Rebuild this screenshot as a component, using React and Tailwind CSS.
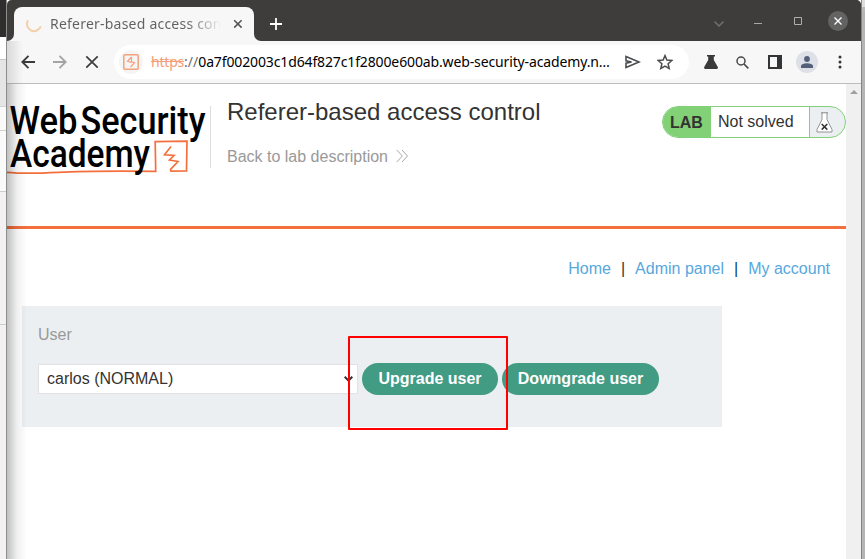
import React from "react";

function BackgroundLeft() {
  return (
    <div className="flex w-[6px] shrink-0 flex-col bg-[#f3f1f2]">
      <div className="h-[37px] bg-[#2f2d2d]" />
      <div className="h-[22px] bg-white" />
      <div className="h-[47px] border-t border-[#c8c8c8] bg-[#e5e5e5]" />
      <div className="h-[24px] border-t border-[#cfd4d4] bg-[#fafafa]" />
      <div className="h-[61px] border-t border-[#d0d0d0] bg-[#fafafa]" />
      <div className="h-[134px] border-y border-[#cccccc]" />
    </div>
  );
}

function TabBar() {
  return (
    <div className="flex h-[41px] shrink-0 bg-[#3f3d3b]">
      <div className="flex w-[7px] flex-col justify-end bg-[#f7f7f7]">
        <div className="h-full rounded-br-[7px] bg-[#3f3d3b]" />
      </div>
      <div className="flex w-[240px] bg-[#3f3d3b] pt-[7px]">
        <div className="flex w-full items-center rounded-t-[8px] bg-[#f7f7f7] pl-[11px]">
          <svg width="18" height="18" viewBox="0 0 18 18" fill="none" className="shrink-0">
            <path d="M3 5.3A7.1 7.1 0 1 0 15.8 11.2" stroke="#f3cfaa" strokeWidth="2" />
          </svg>
          <div className="ml-[7px] h-[20px] w-[171px] overflow-hidden whitespace-nowrap bg-gradient-to-r from-[#5f6061] from-80% to-[#f7f7f7] bg-clip-text font-['Noto_Sans',sans-serif] text-[14px] leading-[20px] tracking-[0.22px] text-transparent">
            Referer-based access con
          </div>
          <svg width="10" height="10" viewBox="0 0 10 10" className="ml-[12px] shrink-0">
            <path d="M1.2 1.2l7.4 7.4M8.6 1.2L1.2 8.6" stroke="#555" strokeWidth="1.6" />
          </svg>
        </div>
      </div>
      <div className="w-[8px] bg-[#f7f7f7]">
        <div className="h-full rounded-bl-[7px] bg-[#3f3d3b]" />
      </div>
      <div className="flex flex-1 items-start pl-[8px] pt-[18px]">
        <svg width="12" height="12" viewBox="0 0 12 12">
          <path d="M6 0v12M0 6h12" stroke="#fff" strokeWidth="1.8" />
        </svg>
      </div>
      <div className="flex h-[41px] items-start pt-[11px]">
        <svg width="10" height="20" viewBox="0 0 10 20" className="mr-[30px]">
          <path d="M.5 10.5L5 15l4.500-4.500" fill="none" stroke="#73706e" strokeWidth="1.5" />
        </svg>
        <svg width="8" height="20" viewBox="0 0 8 20" className="mr-[32px]">
          <path d="M0 12.500h8" stroke="#aaa8a5" />
        </svg>
        <svg width="8" height="20" viewBox="0 0 8 20" className="mr-[26px]">
          <path d="M.5 6.500h7v7h-7z" fill="none" stroke="#b0aeac" />
        </svg>
        <div className="mr-[13px] flex size-[20px] items-center justify-center rounded-full bg-[#636363]">
          <svg width="8" height="8" viewBox="0 0 8 8">
            <path d="M.5.5l7 7M7.500.5l-7 7" stroke="#fff" strokeWidth="1.4" />
          </svg>
        </div>
      </div>
    </div>
  );
}

function Toolbar() {
  return (
    <div className="flex h-[43px] shrink-0 items-center border-b border-[#bdbdbd] bg-[#f7f7f7] pl-[14px]">
      <svg width="14" height="14" viewBox="0 0 14 14" fill="none" stroke="#3a3b3d" strokeWidth="1.9">
        <path d="M14 7H1.500M7.500 .8L1.300 7l6.200 6.200" />
      </svg>
      <svg width="14" height="14" viewBox="0 0 14 14" fill="none" stroke="#a4a4a4" strokeWidth="1.9" className="ml-[18px]">
        <path d="M0 7h12.500M6.500 .8L12.700 7l-6.200 6.200" />
      </svg>
      <svg width="14" height="14" viewBox="0 0 14 14" fill="none" stroke="#3f4042" strokeWidth="1.8" className="ml-[18px]">
        <path d="M1.300 1.300l11.400 11.400M12.700 1.300L1.300 12.700" />
      </svg>
      <div className="ml-[15px] flex h-[34px] w-[575px] items-center rounded-full bg-white pl-[5px]">
        <div className="flex size-[24px] shrink-0 items-center justify-center rounded-full bg-[#f5f5f5]">
          <svg width="16" height="16" viewBox="0 0 16 16" fill="none" stroke="#f4a17d">
            <rect x=".8" y=".8" width="14.400" height="14.400" rx="1.200" strokeWidth="1.500" />
            <path d="M8.500 3L4.500 7.300l3 1V9M7.500 13l4-4.300-3-1V3" strokeWidth="1.200" />
          </svg>
        </div>
        <div className="ml-[8px] w-[474px] shrink-0 whitespace-nowrap font-['Noto_Sans',sans-serif] text-[14px] leading-[20px] text-black">
          <span className="tracking-[-0.2px] text-[#f49d76] line-through">https</span>
          <span className="text-[#6d6d6d]">://</span>
          <span className="tracking-[-0.13px]">0a7f002003c1d64f827c1f2800e600ab.web-security-academy.n…</span>
        </div>
        <svg width="16" height="14" viewBox="0 0 16 14" fill="none" stroke="#4c4d4f" strokeWidth="1.600" className="shrink-0">
          <path d="M1 1.500L14 7 1 12.500V8.200L6.500 7 1 5.800z" />
        </svg>
        <svg width="16" height="16" viewBox="0 0 16 16" fill="none" stroke="#4c4d4f" strokeWidth="1.500" className="ml-[16px] shrink-0">
          <path d="M8 1.600l1.900 4.500 4.900.4-3.700 3.200 1.100 4.800L8 12l-4.200 2.500 1.100-4.800L1.200 6.500l4.900-.4z" />
        </svg>
      </div>
      <svg width="14" height="14" viewBox="0 0 14 14" fill="#3a3a3a" className="ml-[15px]">
        <path d="M3 0h8v1.500H9.800V5l4 7q.5 2-1.300 2h-11Q-.3 14 .2 12l4-7V1.500H3z" />
      </svg>
      <svg width="13" height="13" viewBox="0 0 13 13" fill="none" stroke="#47484a" strokeWidth="1.500" className="ml-[18px]">
        <circle cx="5" cy="5" r="4" />
        <path d="M8 8l4.300 4.300" strokeWidth="1.700" />
      </svg>
      <svg width="14" height="14" viewBox="0 0 14 14" className="ml-[19px]">
        <path fill="#333435" fillRule="evenodd" d="M0 0h14v14H0zM2 2v10h7V2z" />
      </svg>
      <div className="ml-[14px] flex size-[22px] items-center justify-center rounded-full bg-[#dde1e7]">
        <svg width="12" height="12" viewBox="0 0 12 12" fill="#536078">
          <circle cx="6" cy="3" r="2.900" />
          <path d="M0 12V10C0 8 4 7.200 6 7.200S12 8 12 10v2z" />
        </svg>
      </div>
      <svg width="4" height="14" viewBox="0 0 4 14" fill="#333" className="ml-[20px]">
        <circle cx="2" cy="2" r="1.500" />
        <circle cx="2" cy="7" r="1.500" />
        <circle cx="2" cy="12" r="1.500" />
      </svg>
    </div>
  );
}

function AcademyLogo() {
  return (
    <svg width="200" height="82" viewBox="7 96 200 82" className="shrink-0 overflow-visible">
      <path d="M7 172.300Q25 174 58 172.300T155.700 171.300L155.200 141.600 187 141.100 186.500 170.800 171 171.200 170.500 169.500 178 161.500 169.500 160 174 155.500 164.500 154.800 171 146.500" fill="none" stroke="#f36f3d" strokeWidth="1.700" />
      <g fontFamily="Roboto, sans-serif" fontSize="38" fontWeight="500" fill="#000">
        <text x="9.500" y="134.300" textLength="68" lengthAdjust="spacingAndGlyphs">Web</text>
        <text x="80.500" y="134.300" textLength="125" lengthAdjust="spacingAndGlyphs">Security</text>
        <text x="10" y="167" textLength="140" lengthAdjust="spacingAndGlyphs">Academy</text>
      </g>
    </svg>
  );
}

function LabStatus() {
  return (
    <div className="mt-[22px] flex h-[32px] w-[184px] shrink-0 overflow-hidden rounded-full border border-[#82d17a] bg-[#ebeff2] text-[16px] leading-[30px] text-[#333332]">
      <div className="w-[48px] bg-[#82d177] pl-[7px] pt-px font-bold">LAB</div>
      <div className="w-[99px] border-r border-[#82d17a] bg-white pl-[7px]">Not solved</div>
      <svg width="17" height="21" viewBox="0 0 17 21" fill="none" className="ml-[6px] mt-[5px]">
        <path d="M6 1v6.500L1 17.500V20h15v-2.500L11 7.500V1" fill="#fff" stroke="#939393" />
        <path d="M5 .8h7" stroke="#888" />
        <path d="M5.700 12l5.600 5.600M11.300 12l-5.600 5.600" stroke="#333" strokeWidth="1.500" />
      </svg>
    </div>
  );
}

function PageHeader() {
  return (
    <header className="flex h-[145px] shrink-0 border-b-[3px] border-[#f36f3d]">
      <div className="pt-[12px]">
        <AcademyLogo />
      </div>
      <div className="ml-[3px] mt-[22px] h-[62px] w-px shrink-0 bg-[#dddddf]" />
      <div className="flex flex-1 flex-col pl-[16px] pt-[12px]">
        <h2 className="whitespace-nowrap text-[24px] leading-[32px] text-[#333332]">Referer-based access control</h2>
        <a className="mt-[19px] flex items-center text-[16px] leading-[20px] text-[#999]">
          Back to lab description
          <svg width="13" height="14" viewBox="0 0 13 14" fill="none" stroke="#aaa" className="mb-[2px] ml-[8px]">
            <path d="M.8 1l5.500 6-5.500 6M6 1l5.500 6L6 13" />
          </svg>
        </a>
      </div>
      <LabStatus />
    </header>
  );
}

function Page() {
  return (
    <div className="flex min-h-0 flex-1">
      <main className="flex w-[839px] flex-col bg-white text-[16px] text-[#333332]">
        <PageHeader />
        <nav className="mt-[30px] flex h-[20px] justify-end gap-[10px] pr-[16px] leading-[20px] text-[#56a8de]">
          <a>Home</a>
          <span className="text-[#333]">|</span>
          <a>Admin panel</a>
          <span className="text-[#0b3b66]">|</span>
          <a>My account</a>
        </nav>
        <form className="ml-[15px] mt-[27px] h-[121px] w-[700px] bg-[#ebeff2] px-[16px] pt-[19px]">
          <label className="block leading-[20px] text-[#999]">User</label>
          <div className="mt-[18px] flex items-center gap-[4px]">
            <div className="flex h-[30px] w-[320px] items-center justify-between border border-[#e2e2e4] bg-white pl-[8px] pr-[4px]">
              <span>carlos (NORMAL)</span>
              <svg width="9" height="6" viewBox="0 0 9 6" fill="none" stroke="#333" strokeWidth="2">
                <path d="M.7.8l3.800 3.800L8.300.8" />
              </svg>
            </div>
            <button type="button" className="h-[32px] w-[136px] rounded-full bg-[#429b83] font-bold text-white">
              Upgrade user
            </button>
            <button type="button" className="h-[32px] w-[157px] rounded-full bg-[#429b83] font-bold text-white">
              Downgrade user
            </button>
          </div>
        </form>
      </main>
      <div className="flex w-[15px] flex-col items-center bg-[#f0f0f0] pt-[6px]">
        <svg width="8" height="4" viewBox="0 0 8 4">
          <path d="M4 0l4 4H0z" fill="#a0a0a0" />
        </svg>
      </div>
    </div>
  );
}

export default function App() {
  return (
    <div className="relative flex h-[559px] w-[865px] overflow-hidden font-['Liberation_Sans',Arial,sans-serif]">
      <BackgroundLeft />
      <div className="w-px shrink-0 bg-[#8c8e8e]" />
      <div className="flex w-[854px] shrink-0 flex-col overflow-hidden rounded-t-[5px] bg-[#3f3d3b]">
        <TabBar />
        <Toolbar />
        <Page />
      </div>
      <div className="w-px shrink-0 bg-[#858585]" />
      <div className="flex flex-1 flex-col bg-[#b5b5b5]">
        <div className="h-[7px] bg-[#dedede]" />
        <div className="h-[5px] bg-[#b9b9b9]" />
      </div>
      <div className="pointer-events-none absolute bottom-0 left-[7px] top-[84px] w-[20px] bg-gradient-to-r from-black/25 via-black/6 to-transparent" />
      <div className="pointer-events-none absolute left-[7px] top-[41px] h-[43px] w-[16px] bg-gradient-to-r from-black/12 to-transparent" />
      <div className="pointer-events-none absolute left-[348px] top-[336px] h-[94px] w-[160px] rounded-[1px] border-2 border-[#fe0000]" />
    </div>
  );
}
